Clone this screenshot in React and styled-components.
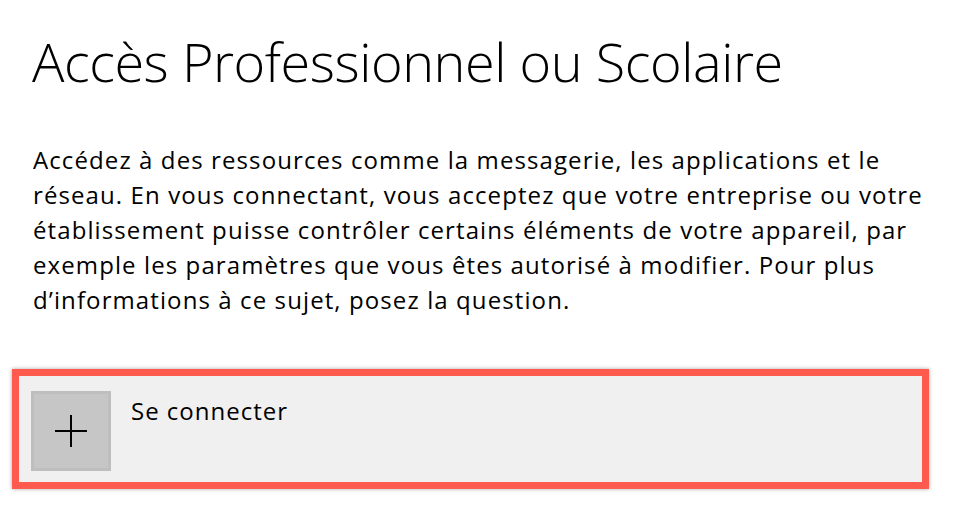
import React from "react";
import styled, { createGlobalStyle } from "styled-components";

const GlobalStyle = createGlobalStyle`
  html, body {
    margin: 0;
    padding: 0;
    background: #fff;
  }
  body {
    font-family: "Open Sans", "Noto Sans", "Liberation Sans", sans-serif;
    color: #000;
  }
`;

const Page = styled.main`
  width: 955px;
  height: 517px;
  box-sizing: border-box;
  padding: 22px 0 0 12px;
  overflow: hidden;
`;

const Title = styled.h1`
  margin: 0 0 0 20px;
  font-size: 54px;
  font-weight: 300;
  line-height: 78px;
  letter-spacing: -0.45px;
`;

const Intro = styled.p`
  margin: 42px 0 0 21px;
  font-size: 24px;
  line-height: 35px;
  letter-spacing: 1.1px;
`;

const Highlight = styled.div`
  margin-top: 52px;
  width: 917px;
  box-sizing: border-box;
  border: 7px solid #ff5a4e;
  box-shadow: 0 0 4px rgba(0, 0, 0, 0.35), inset 0 0 3px rgba(0, 0, 0, 0.3);
`;

const AddButton = styled.button`
  display: flex;
  align-items: flex-start;
  gap: 20px;
  width: 100%;
  height: 106px;
  padding: 15px 12px;
  box-sizing: border-box;
  border: none;
  background: #f0f0f0;
  font: inherit;
  text-align: left;
  cursor: pointer;
`;

const IconTile = styled.span`
  display: flex;
  align-items: center;
  justify-content: center;
  width: 80px;
  height: 80px;
  flex-shrink: 0;
  box-sizing: border-box;
  background: #c6c6c6;
  border: 3px solid #bebebe;
`;

const Label = styled.span`
  margin-top: 5px;
  font-size: 24px;
  line-height: 30px;
  color: #000;
  letter-spacing: 1px;
`;

export default function App() {
  return (
    <Page>
      <GlobalStyle />
      <Title>Accès Professionnel ou Scolaire</Title>
      <Intro>
        Accédez à des ressources comme la messagerie, les applications et le
        <br />
        réseau. En vous connectant, vous acceptez que votre entreprise ou votre
        <br />
        établissement puisse contrôler certains éléments de votre appareil, par
        <br />
        exemple les paramètres que vous êtes autorisé à modifier. Pour plus
        <br />
        d’informations à ce sujet, posez la question.
      </Intro>
      <Highlight>
        <AddButton>
          <IconTile>
            <svg width="34" height="34" viewBox="0 0 34 34">
              <path d="M17 1v32M1 17h32" stroke="#000" strokeWidth="2" />
            </svg>
          </IconTile>
          <Label>Se connecter</Label>
        </AddButton>
      </Highlight>
    </Page>
  );
}
